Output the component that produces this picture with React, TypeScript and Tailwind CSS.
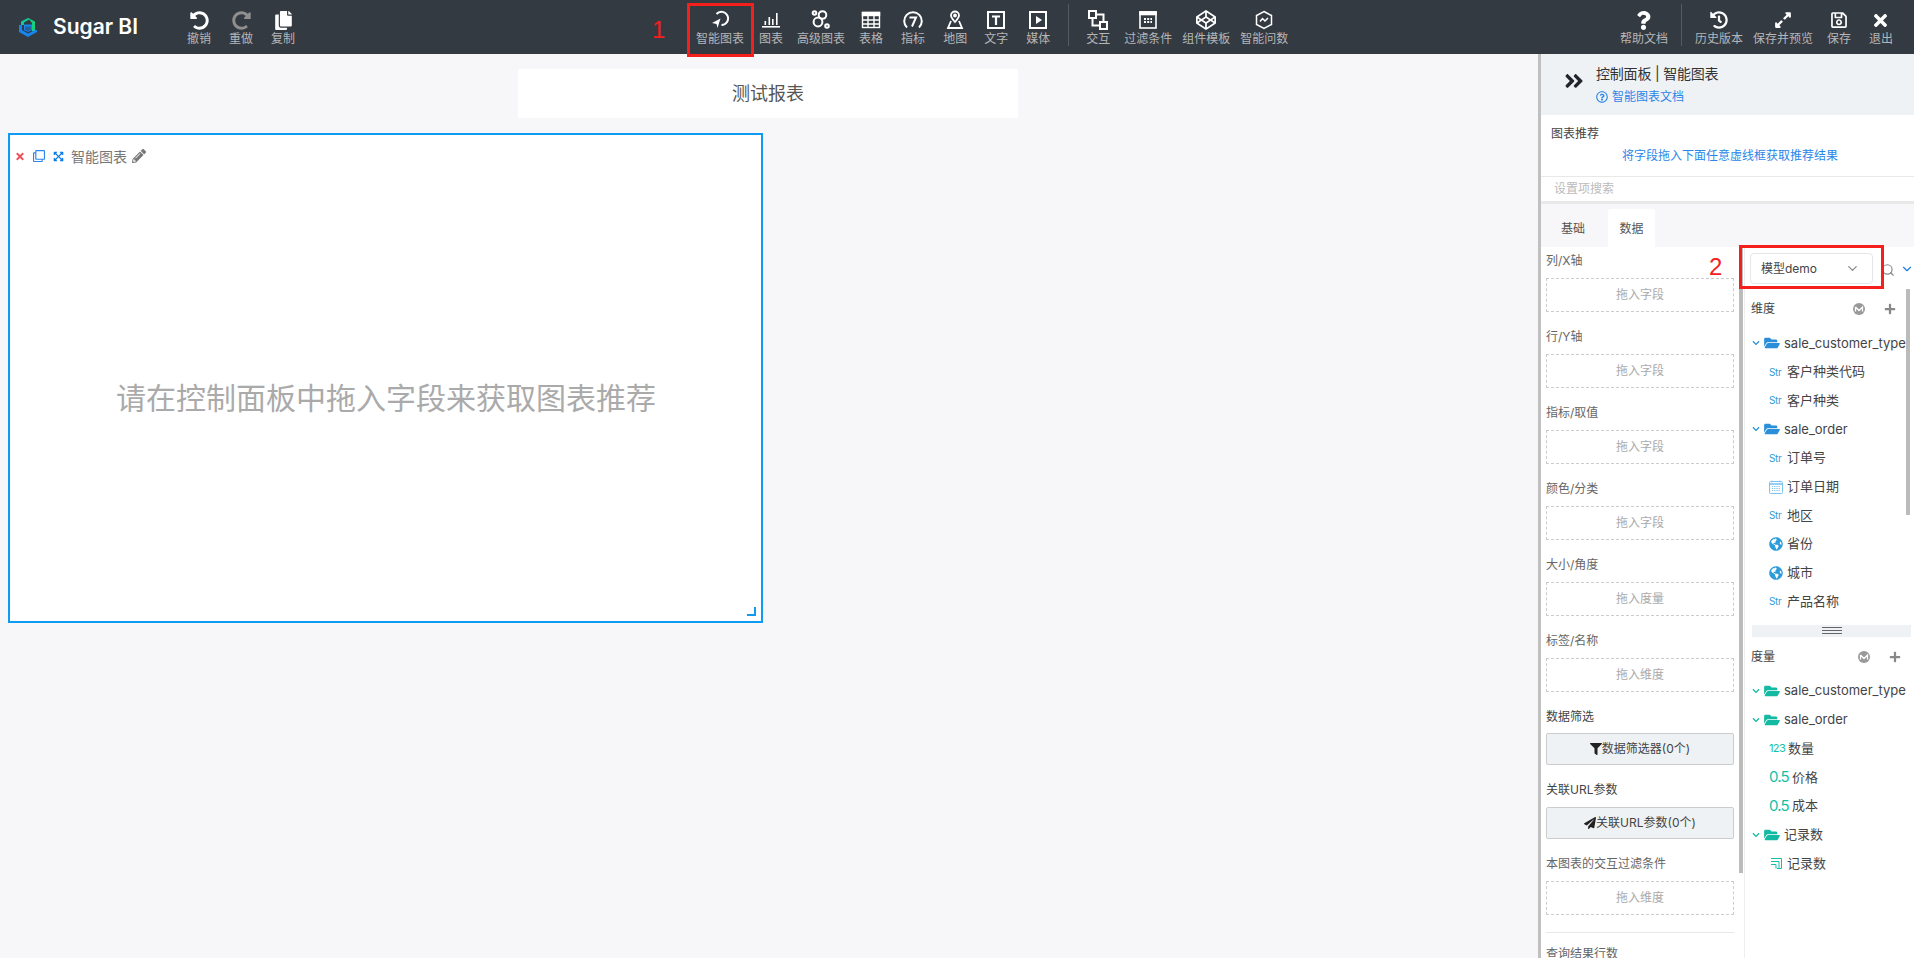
import type { ReactNode } from 'react';
import {
  FaUndoAlt,
  FaRedoAlt,
  FaCopy,
  FaQuestion,
  FaHistory,
  FaExpandAlt,
  FaRegSave,
  FaTimes,
  FaAngleDoubleRight,
  FaFilter,
  FaPaperPlane,
  FaPencilAlt,
  FaFolderOpen,
  FaGlobeAmericas,
  FaCodepen,
  FaChevronDown,
  FaPlus,
  FaRegQuestionCircle,
  FaRegClone,
  FaExpandArrowsAlt,
} from 'react-icons/fa';
import { ChevronDown, Search } from 'lucide-react';

const Logo = () => (
  <svg width="20" height="20" viewBox="0 0 20 20">
    <path d="M3 4.5 L10 1 L12 2 L6 5.5 V8 H3 Z" fill="#10c9a0" />
    <path d="M10 1 L17 4.5 V14 H14 V6 Z" fill="#12d27c" />
    <path d="M1 8 H4 V13 L10 16.5 L17 13 H19 V15 L10 20 L1 15 Z" fill="#1685f0" />
    <path d="M6 7.5 H14 V13 L10 15 L6 13 Z" fill="#1685f0" />
    <path d="M8 9.5 V13 M10 9.5 V14 M12 9.5 V13" stroke="#343a42" strokeWidth="1" />
  </svg>
);

const SmartIcon = () => (
  <svg width="20" height="20" viewBox="0 0 20 20" fill="none" stroke="#fff">
    <path d="M6.5 4 A6.6 6.6 0 1 1 11.5 15" strokeWidth="2" />
    <path d="M2 13 L10.5 8.5 L7.5 18 L6.5 14 Z" fill="#fff" stroke="none" />
  </svg>
);

const BarsIcon = () => (
  <svg width="20" height="20" viewBox="0 0 20 20" fill="#fff">
    <rect x="1" y="16" width="18" height="1.6" />
    <rect x="3.5" y="11" width="1.6" height="4" />
    <rect x="7.5" y="7" width="1.6" height="8" />
    <rect x="11" y="9" width="1.6" height="6" />
    <rect x="15" y="3" width="1.6" height="12" />
  </svg>
);

const CirclesIcon = () => (
  <svg width="20" height="20" viewBox="0 0 20 20" fill="none" stroke="#fff" strokeWidth="2">
    <circle cx="3.5" cy="3" r="1.8" />
    <circle cx="11.5" cy="5" r="3.8" />
    <circle cx="7" cy="12" r="4.4" />
    <circle cx="16" cy="16" r="1.8" />
  </svg>
);

const TableIcon = () => (
  <svg width="20" height="20" viewBox="0 0 20 20" fill="none" stroke="#fff" strokeWidth="1.4">
    <rect x="1.5" y="2.5" width="17" height="15" />
    <rect x="1.5" y="2.5" width="17" height="3" fill="#fff" />
    <path d="M1.5 10 H18.5 M1.5 14 H18.5 M7 6 V17.5 M13 6 V17.5" />
  </svg>
);

const GaugeIcon = () => (
  <svg width="20" height="20" viewBox="0 0 20 20" fill="none" stroke="#fff" strokeWidth="2">
    <path d="M4 17.5 A8.8 8.8 0 1 1 16 17.5" />
    <path d="M6.5 7.5 H13 L9 16.5" />
  </svg>
);

const PinIcon = () => (
  <svg width="20" height="20" viewBox="0 0 20 20" fill="none" stroke="#fff" strokeWidth="1.8">
    <path d="M10 12 C7.5 9 6 7.5 6 5.5 A4 4 0 0 1 14 5.5 C14 7.5 12.5 9 10 12 Z" />
    <circle cx="10" cy="5.5" r="1" fill="#fff" />
    <path d="M6 11 L3 18 H17 L14 11" />
  </svg>
);

const TextIcon = () => (
  <svg width="20" height="20" viewBox="0 0 20 20" fill="none" stroke="#fff">
    <rect x="2" y="2" width="16" height="16" strokeWidth="2" />
    <path d="M6 6.5 H14 M10 6.5 V15" strokeWidth="2.2" />
  </svg>
);

const MediaIcon = () => (
  <svg width="20" height="20" viewBox="0 0 20 20" fill="none" stroke="#fff">
    <rect x="2" y="2" width="16" height="16" strokeWidth="2" />
    <path d="M8 6 L14 10 L8 14 Z" fill="#fff" stroke="none" />
  </svg>
);

const LinkIcon = () => (
  <svg width="20" height="20" viewBox="0 0 20 20" fill="none" stroke="#fff" strokeWidth="2">
    <rect x="1" y="1" width="7" height="7" />
    <rect x="12" y="12" width="7" height="7" />
    <path d="M8 4.5 H15.5 V12 M4.5 8 V15.5 H12" />
  </svg>
);

const FilterBoxIcon = () => (
  <svg width="20" height="20" viewBox="0 0 20 20" fill="none" stroke="#fff" strokeWidth="1.6">
    <rect x="2" y="2" width="16" height="16" />
    <rect x="2" y="2" width="16" height="2.5" fill="#fff" />
    <path d="M6 9 H14 M6 12 H14" strokeDasharray="2 1.2" strokeWidth="1.8" />
  </svg>
);

const AskIcon = () => (
  <svg width="20" height="20" viewBox="0 0 20 20" fill="none" stroke="#fff" strokeWidth="1.5">
    <path d="M10 1.5 L17.5 5.5 V14.5 L10 18.5 L2.5 14.5 V5.5 Z" />
    <path d="M6 11.5 L8.5 8.5 L11 11 L14 8" />
  </svg>
);

const CollapseAll = () => (
  <svg width="12" height="12" viewBox="0 0 12 12">
    <circle cx="6" cy="6" r="6" fill="#999" />
    <path d="M2.5 4 L6 7.5 L9.5 4 V8.5 M2.5 4 V8.5" fill="none" stroke="#fff" strokeWidth="1.3" />
  </svg>
);

const Tool = ({ label, icon, className = '' }: { label: string; icon: ReactNode; className?: string }) => (
  <div className={`flex flex-col items-center pt-[9px] ${className}`}>
    <div className="h-[22px] flex items-center justify-center text-white">{icon}</div>
    <span className="text-[12px] leading-[16px] text-[#b4b6b8] whitespace-nowrap">{label}</span>
  </div>
);

const Divider = ({ className = '' }: { className?: string }) => (
  <div className={`w-px h-[42px] mt-[4px] bg-[#565b62] ${className}`} />
);

const DropBox = ({ text }: { text: string }) => (
  <div className="h-[34px] border border-dashed border-[#ccc] flex items-center justify-center text-[12px] text-[#aaa]">
    {text}
  </div>
);

const Field = ({ label, text, className = 'mt-[15px]' }: { label: string; text: string; className?: string }) => (
  <div className={className}>
    <div className="h-[20px] leading-[20px] mb-[7px] text-[12px] text-[#666]">{label}</div>
    <DropBox text={text} />
  </div>
);

const ActionButton = ({ icon, text }: { icon: ReactNode; text: string }) => (
  <div className="h-[32px] border border-[#ccc] rounded-[2px] bg-[#eff2f4] flex items-center justify-center text-[12px] text-[#444]">
    {icon}
    {text}
  </div>
);

const FolderRow = ({ name, color }: { name: string; color: string }) => (
  <div className="h-[28.7px] flex items-center whitespace-nowrap">
    <FaChevronDown className={`w-[8px] h-[8px] ml-[6px] ${color}`} />
    <FaFolderOpen className={`w-[16px] h-[14px] ml-[4px] ${color}`} />
    <span className="ml-[4px] text-[13px] text-[#444]">{name}</span>
  </div>
);

const LeafRow = ({ icon, name }: { icon: ReactNode; name: string }) => (
  <div className="h-[28.7px] flex items-center pl-[23px] whitespace-nowrap">
    {icon}
    <span className="ml-[4px] text-[13px] text-[#444]">{name}</span>
  </div>
);

const StrTag = () => <span className="w-[14px] text-[10px] tracking-[-0.3px] text-[#2d9cdb]">Str</span>;
const NumTag = () => <span className="w-[15px] text-[11px] tracking-[-0.6px] text-[#13bfa6]">123</span>;
const FloatTag = () => <span className="w-[19px] text-[15px] tracking-[-0.8px] text-[#13bfa6]">0.5</span>;
const Globe = () => <FaGlobeAmericas className="w-[14px] h-[14px] text-[#2d9cdb]" />;
const Calendar = () => (
  <svg width="14" height="14" viewBox="0 0 14 14" fill="none" stroke="#7cc3ee">
    <rect x="0.5" y="1.5" width="13" height="12" rx="1" />
    <path d="M0.5 4 H13.5" strokeWidth="1.6" />
    <path d="M3 0.5 V2.5 M11 0.5 V2.5" />
    <path d="M3 6.5 H11 M3 8.5 H11 M3 10.5 H11" strokeDasharray="1.2 1" />
  </svg>
);
const RecordIcon = () => (
  <svg width="14" height="13" viewBox="0 0 14 13" fill="none" stroke="#13bfa6">
    <path d="M2 1.5 H12.5 V11.5 H10" />
    <path d="M2 4.5 H10 V11.5 H8" />
    <path d="M2 7.5 H7 V11.5" />
  </svg>
);

const SectionHead = ({ title, className }: { title: string; className: string }) => (
  <div className={`h-[24px] flex items-center text-[12px] text-[#444] ${className}`}>
    <span>{title}</span>
    <span className="ml-auto">
      <CollapseAll />
    </span>
    <FaPlus className="ml-[19px] w-[12px] h-[12px] text-[#888]" />
  </div>
);

export default function App() {
  return (
    <div className="relative h-[958px] overflow-hidden bg-[#f7f7f9] [font-family:Inter,'Noto_Sans_CJK_SC',sans-serif]">
      <header className="h-[54px] bg-[#343a42] flex">
        <div className="w-[187px] flex items-center pl-[18px]">
          <Logo />
          <span className="ml-[15px] text-[21px] font-semibold text-white">Sugar BI</span>
        </div>
        <Tool label="撤销" icon={<FaUndoAlt size={19} />} />
        <Tool label="重做" className="ml-[18px]" icon={<FaRedoAlt size={19} className="text-[#8f8f8f]" />} />
        <Tool label="复制" className="ml-[18px]" icon={<FaCopy size={19} />} />

        <Tool label="智能图表" className="ml-[401px]" icon={<SmartIcon />} />
        <Tool label="图表" className="ml-[15px]" icon={<BarsIcon />} />
        <Tool label="高级图表" className="ml-[14px]" icon={<CirclesIcon />} />
        <Tool label="表格" className="ml-[14px]" icon={<TableIcon />} />
        <Tool label="指标" className="ml-[18px]" icon={<GaugeIcon />} />
        <Tool label="地图" className="ml-[18px]" icon={<PinIcon />} />
        <Tool label="文字" className="ml-[17px]" icon={<TextIcon />} />
        <Tool label="媒体" className="ml-[18px]" icon={<MediaIcon />} />
        <Divider className="ml-[18px]" />
        <Tool label="交互" className="ml-[17px]" icon={<LinkIcon />} />
        <Tool label="过滤条件" className="ml-[14px]" icon={<FilterBoxIcon />} />
        <Tool label="组件模板" className="ml-[10px]" icon={<FaCodepen size={20} />} />
        <Tool label="智能问数" className="ml-[10px]" icon={<AskIcon />} />

        <Tool label="帮助文档" className="ml-auto" icon={<FaQuestion size={19} />} />
        <Divider className="ml-[13px]" />
        <Tool label="历史版本" className="ml-[13px]" icon={<FaHistory size={18} />} />
        <Tool label="保存并预览" className="ml-[10px]" icon={<FaExpandAlt size={18} />} />
        <Tool label="保存" className="ml-[14px]" icon={<FaRegSave size={18} />} />
        <Tool label="退出" className="ml-[18px] mr-[21px]" icon={<FaTimes size={19} />} />
      </header>

      <div className="flex h-[904px]">
        <main className="flex-1 min-w-0">
          <div className="ml-[518px] mt-[15px] w-[500px] h-[49px] bg-white rounded-[2px] flex items-center justify-center text-[18px] text-[#555]">
            测试报表
          </div>
          <section className="relative ml-[8px] mt-[15px] w-[755px] h-[490px] bg-white border-2 border-[#0f9bf2]">
            <div className="flex items-center h-[18px] mt-[12px] pl-[5px]">
              <FaTimes className="w-[10px] h-[11px] text-[#f0505a]" />
              <FaRegClone className="ml-[8px] w-[12px] h-[12px] text-[#2a86ea]" />
              <FaExpandArrowsAlt className="ml-[8px] w-[11px] h-[11px] text-[#0b7bec]" />
              <span className="ml-[7px] text-[14px] text-[#777]">智能图表</span>
              <FaPencilAlt className="ml-[5px] w-[14px] h-[14px] text-[#777]" />
            </div>
            <div className="mt-[213px] ml-[106px] text-[30px] leading-[40px] text-[#aaa] whitespace-nowrap">
              请在控制面板中拖入字段来获取图表推荐
            </div>
            <div className="absolute right-[5px] bottom-[5px] w-[9px] h-[9px] border-r-2 border-b-2 border-[#0f9bf2]" />
          </section>
        </main>

        <aside className="w-[376px] shrink-0 border-l-[3px] border-[#c0c0c0] bg-white flex flex-col">
          <div className="h-[61px] bg-[#eff2f4] flex">
            <FaAngleDoubleRight className="mt-[16px] ml-[22px] w-[22px] h-[22px] text-[#22262c]" />
            <div className="ml-[11px] pt-[10px]">
              <div className="text-[14px] leading-[20px] tracking-[-0.2px] text-[#333]">控制面板 | 智能图表</div>
              <div className="flex items-center text-[12px] leading-[20px] mt-[3px] text-[#2b86e8]">
                <FaRegQuestionCircle className="w-[12px] h-[12px] mr-[4px]" />
                智能图表文档
              </div>
            </div>
          </div>
          <div className="h-[61px]">
            <div className="pl-[10px] pt-[10px] text-[12px] leading-[18px] text-[#444]">图表推荐</div>
            <div className="mt-[4px] pl-[81px] text-[12px] leading-[18px] text-[#2b86e8]">
              将字段拖入下面任意虚线框获取推荐结果
            </div>
          </div>
          <div className="h-[28px] border-t border-b-[3px] border-[#e8e8e8] pl-[13px] flex items-center text-[12px] text-[#bbb]">
            设置项搜索
          </div>
          <div className="h-[43px] bg-[#f7f7f9] flex items-end text-[12px] text-[#555]">
            <div className="w-[48px] ml-[8px] h-[38px] pt-[1px] flex items-center justify-center">基础</div>
            <div className="w-[47px] ml-[11px] h-[38px] pt-[1px] bg-white rounded-t-[3px] flex items-center justify-center">数据</div>
          </div>

          <div className="relative flex flex-1 min-h-0">
            <div className="w-[203px] shrink-0 pl-[5px] pr-[10px]">
              <Field label="列/X轴" text="拖入字段" className="mt-[4px]" />
              <Field label="行/Y轴" text="拖入字段" />
              <Field label="指标/取值" text="拖入字段" />
              <Field label="颜色/分类" text="拖入字段" />
              <Field label="大小/角度" text="拖入度量" />
              <Field label="标签/名称" text="拖入维度" />
              <div className="mt-[15px]">
                <div className="h-[20px] leading-[20px] mb-[6px] text-[12px] text-[#444]">数据筛选</div>
                <ActionButton icon={<FaFilter className="w-[12px] h-[12px] text-[#222]" />} text="数据筛选器(0个)" />
              </div>
              <div className="mt-[15px]">
                <div className="h-[20px] leading-[20px] mb-[7px] text-[12px] text-[#444]">关联URL参数</div>
                <ActionButton icon={<FaPaperPlane className="w-[12px] h-[12px] text-[#222]" />} text="关联URL参数(0个)" />
              </div>
              <Field label="本图表的交互过滤条件" text="拖入维度" />
              <div className="mt-[17px] border-t border-[#e8e8e8]" />
              <div className="mt-[11px] h-[20px] leading-[20px] text-[12px] text-[#666]">查询结果行数</div>
            </div>
            <div className="absolute left-[198px] top-0 w-[4px] h-[626px] bg-[#bbb]" />

            <div className="flex-1 min-w-0 border-l border-[#eee] relative">
              <div className="absolute left-[-6px] top-[-2px] w-[145px] h-[44px] border-[3px] border-[#f5201c] z-10" />
              <div className="ml-[5px] mt-[6px] w-[123px] h-[31px] border border-[#e4e6e8] rounded-[4px] flex items-center pl-[10px] pr-[12px] text-[12px] text-[#444]">
                模型demo
                <ChevronDown className="ml-auto w-[15px] h-[15px] text-[#888]" />
              </div>
              <Search className="absolute left-[136px] top-[16px] w-[14px] h-[14px] text-[#888]" />
              <ChevronDown className="absolute left-[155px] top-[15px] w-[14px] h-[14px] text-[#1d7fe6]" />
              <div className="absolute left-[161px] top-[42px] w-[4px] h-[226px] bg-[#bbb]" />

              <SectionHead title="维度" className="mt-[13px] ml-[6px] mr-[18px]" />
              <div className="mt-[8px] ml-[1px]">
                <FolderRow name="sale_customer_type" color="text-[#2a8fd8]" />
                <LeafRow icon={<StrTag />} name="客户种类代码" />
                <LeafRow icon={<StrTag />} name="客户种类" />
                <FolderRow name="sale_order" color="text-[#2a8fd8]" />
                <LeafRow icon={<StrTag />} name="订单号" />
                <LeafRow icon={<Calendar />} name="订单日期" />
                <LeafRow icon={<StrTag />} name="地区" />
                <LeafRow icon={<Globe />} name="省份" />
                <LeafRow icon={<Globe />} name="城市" />
                <LeafRow icon={<StrTag />} name="产品名称" />
              </div>
              <div className="mt-[9px] ml-[7px] mr-[3px] h-[12px] bg-[#eff2f4] flex flex-col items-center justify-center gap-[2px]">
                <span className="block w-[20px] h-px bg-[#666]" />
                <span className="block w-[20px] h-px bg-[#666]" />
                <span className="block w-[20px] h-px bg-[#666]" />
              </div>
              <SectionHead title="度量" className="mt-[8px] ml-[6px] mr-[13px]" />
              <div className="mt-[8px] ml-[1px]">
                <FolderRow name="sale_customer_type" color="text-[#13b9a0]" />
                <FolderRow name="sale_order" color="text-[#13b9a0]" />
                <LeafRow icon={<NumTag />} name="数量" />
                <LeafRow icon={<FloatTag />} name="价格" />
                <LeafRow icon={<FloatTag />} name="成本" />
                <FolderRow name="记录数" color="text-[#13b9a0]" />
                <LeafRow icon={<RecordIcon />} name="记录数" />
              </div>
            </div>
          </div>
        </aside>
      </div>

      <div className="absolute left-[687px] top-[3px] w-[67px] h-[54px] border-[3px] border-[#f5201c]" />
      <span className="absolute left-[652px] top-[15px] text-[24px] leading-[30px] text-[#f5201c] [font-family:'Liberation_Sans',sans-serif]">1</span>
      <span className="absolute left-[1709px] top-[252px] text-[24px] leading-[30px] text-[#f5201c] [font-family:'Liberation_Sans',sans-serif]">2</span>
    </div>
  );
}
